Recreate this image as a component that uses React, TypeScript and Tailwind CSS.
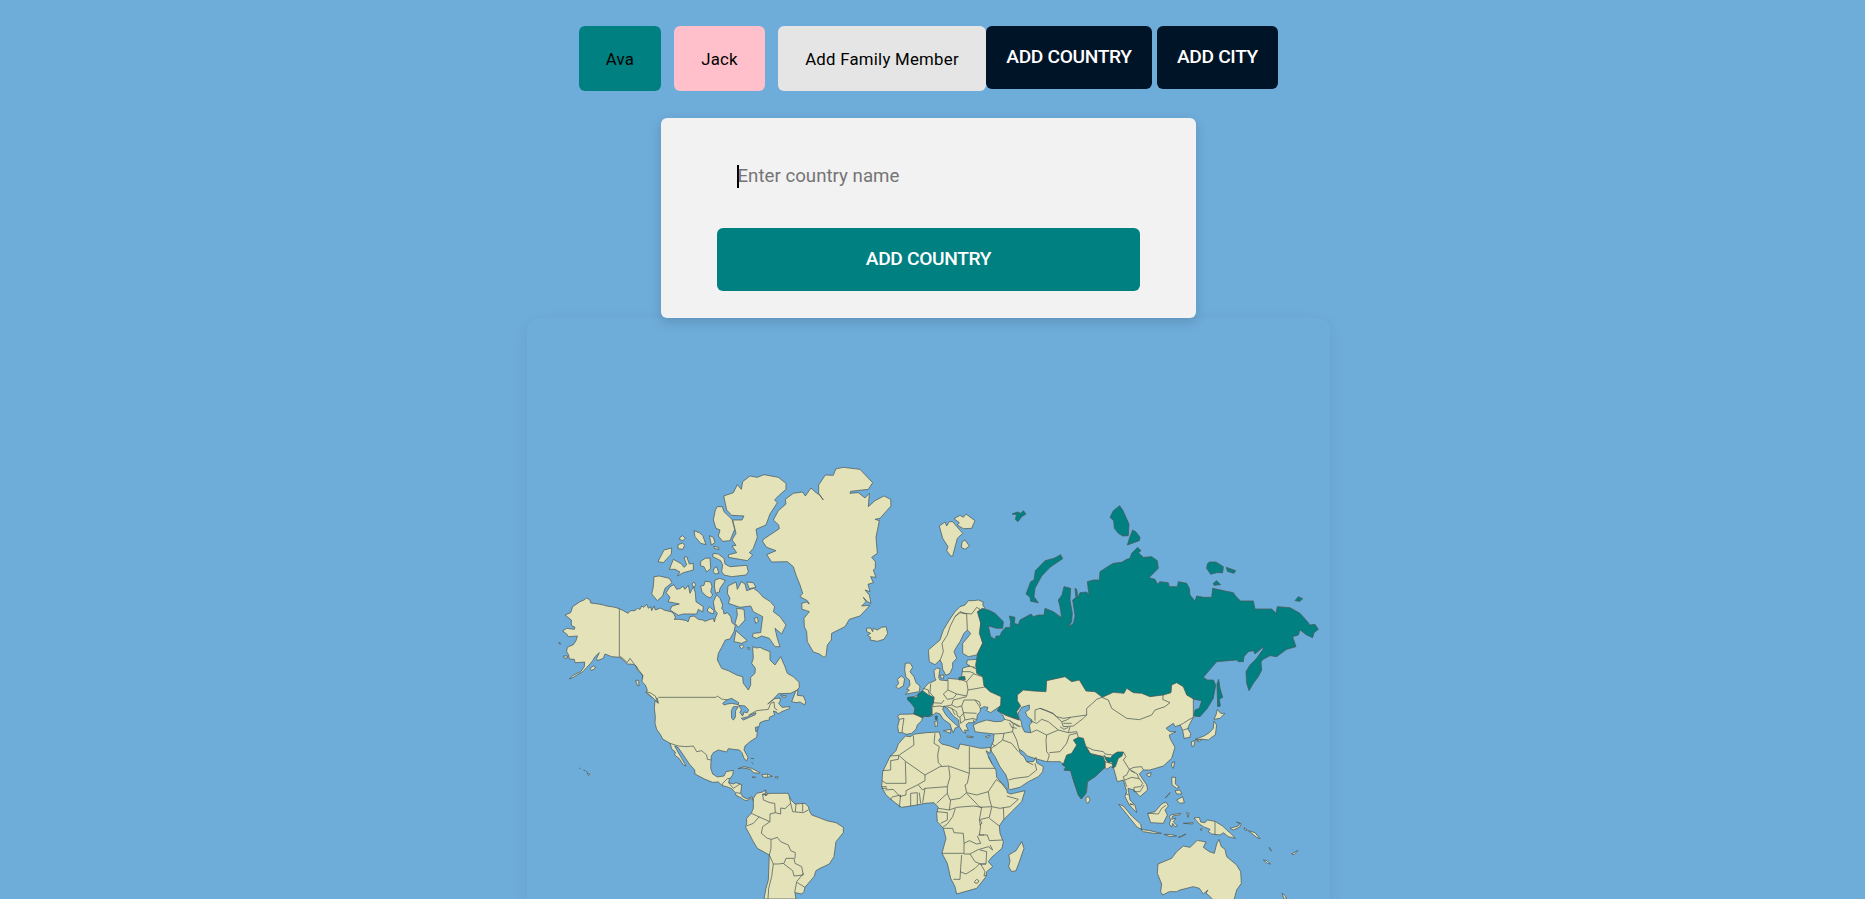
import { useState } from "react";

type Region = {
  x: number;
  y: number;
  land?: string[];
  visited?: string[];
  water?: string[];
  borders?: string[];
};

const REGIONS: Region[] = [
  // North and South America
  {
    x: 540,
    y: 640,
    land: [
      "75,-75 92,-82 98,-100 120,-115 132,-120 140,-126 150,-120 152,-111 175,-108 190,-105 200,-102 225,-98 238,-94 250,-88 264,-80 272,-88 285,-88 292,-95 300,-92 305,-102 312,-98 320,-107 325,-95 332,-100 335,-88 342,-102 346,-90 362,-96 372,-90 395,-84 402,-78 407,-66 402,-62 420,-62 440,-58 444,-54 450,-70 462,-72 475,-62 488,-60 495,-56 510,-62 520,-64 523,-54 526,-66 532,-80 524,-90 520,-115 530,-136 540,-125 548,-105 545,-94 550,-90 552,-78 562,-82 572,-70 576,-52 586,-44 582,-25 570,-3 556,0 545,22 535,40 532,60 545,85 565,92 590,105 608,110 610,130 625,150 632,135 632,112 645,100 646,85 635,70 640,55 638,20 650,24 660,22 672,28 690,35 690,60 705,75 722,50 735,80 742,100 760,110 777,127 778,142 772,150 752,160 715,161 700,178 683,192 704,176 720,174 721,182 716,190 726,202 750,200 748,206 725,215 714,222 710,216 700,213 704,225 688,232 688,240 672,243 660,248 658,258 648,268 652,276 650,292 630,305 615,318 612,330 624,352 620,363 612,355 606,338 598,330 580,328 565,326 560,336 535,330 520,338 514,348 512,385 518,402 532,411 552,408 558,395 580,391 578,405 568,418 566,428 580,432 588,428 605,434 602,460 608,470 622,477 636,470 640,482 632,474 622,482 612,480 604,474 588,466 586,458 575,446 560,440 548,438 535,426 518,427 495,418 465,402 464,390 448,372 430,345 414,322 404,318 414,336 425,355 438,378 430,375 418,356 404,345 406,336 396,328 390,310 368,297 362,285 350,268 345,250 346,230 343,205 345,182 355,190 352,175 335,172 318,158 322,150 316,135 306,125 308,105 292,90 290,80 280,73 262,72 252,62 240,52 215,50 195,42 190,55 172,62 170,55 178,38 165,50 158,62 150,72 128,95 100,112 88,117 98,107 122,95 133,80 134,66 125,67 105,68 103,58 88,57 86,45 80,35 82,22 100,14 108,2 112,-12 85,-10 80,-18 68,-27 80,-35 103,-32 105,-38 94,-44 94,-60",
      "640,475 650,460 668,456 676,450 682,462 678,468 672,460 668,465 690,460 745,460 748,470 755,482 765,492 795,490 805,500 808,512 815,525 840,534 860,542 888,548 910,562 910,578 888,605 882,650 868,672 840,685 828,692 822,710 795,742 792,755 785,762 765,758 768,777 672,777 678,745 685,720 688,645 652,625 640,605 628,582 617,562 620,550 620,535 634,520 640,505",
      "594,386 612,380 635,385 660,398 658,400 640,398 632,388 610,384",
      "666,404 682,402 697,409 680,412 668,411",
      "636,411 647,411 644,414",
      "706,410 714,410 714,414 706,414",
      "755,185 768,152 774,150 772,166 790,168 797,185 794,195 780,186 768,188",
      "318,155 330,158 346,168 353,186 343,178",
      "150,85 160,78 167,81 162,88 154,91",
      "57,7 61,9 61,13 58,12",
      "70,48 82,48 82,54 74,55",
      "287,121 296,121 297,138 292,136",
      "141,399 149,402 146,407",
      "722,165 740,168 735,172 726,170",
    ],
    water: [
      "548,190 560,180 575,175 596,188 595,194 575,190 562,192 552,195",
      "575,235 574,212 580,200 595,200 587,212 586,232 580,240",
      "596,196 615,198 626,210 622,218 612,216 608,228 600,218 604,208",
      "604,235 625,230 632,224 648,218 646,224 628,232 610,240",
      "646,262 655,260 653,270 648,276",
    ],
    borders: [
      "238,-94 238,50 245,52 262,68 270,55 285,75 300,95 308,106 308,115",
      "355,172 528,172 532,168 545,177 562,180",
      "625,226 650,212 685,208 692,190 702,186 704,205 712,210",
      "390,310 415,318 438,320 460,318 470,335 485,332 500,345 502,358 514,360",
      "548,438 548,430 562,416 570,415",
      "566,428 580,445 600,432",
      "588,458 602,460",
      "668,462 670,480 690,488 704,490 706,518 690,522 690,545 660,532 634,520",
      "706,518 722,522 722,504 735,506 752,490 748,470",
      "752,490 758,515 790,518 805,510",
      "768,492 766,515",
      "788,490 788,515",
      "658,530 640,550 620,558",
      "690,545 668,560 664,580 682,595 695,598 712,592 722,605 745,615 752,632 766,638 765,655",
      "693,598 693,625 688,645 700,672 715,672 732,670 738,655 762,655 765,670 785,680 790,705 762,708 758,692 732,672",
      "700,672 695,710 686,745 684,777",
      "790,700 770,725 764,758",
      "772,728 795,742",
      "675,450 678,468",
      "632,355 642,356",
      "634,366 640,372",
      "118,384 122,386",
      "130,390 136,392",
      "138,394 143,396",
      "682,402 682,412",
    ],
  },
  // Canadian Arctic islands
  {
    x: 540,
    y: 460,
    land: [
      "551,108 580,98 592,74 604,88 608,65 630,48 652,52 672,44 715,52 738,70 738,88 715,108 704,120 712,128 690,162 678,195 648,208 652,232 640,265 628,278 638,285 622,302 565,292 566,284 590,278 576,258 588,256 576,240 588,220 578,180 606,180 612,168 575,166 560,150",
      "532,140 547,140 552,155 576,178 584,208 570,242 548,244 535,228 540,210 528,205 520,180 526,150",
      "462,212 478,218 488,226 498,254 482,250 465,230",
      "508,227 520,232 525,248 514,255",
      "521,259 535,262 537,268 524,266",
      "420,232 428,227 436,235 428,242 418,238",
      "414,254 428,249 434,256 428,268 414,266",
      "354,305 372,270 395,264 394,282 370,308",
      "388,328 400,298 425,312 432,322 440,315 432,292 440,290 448,312 460,310 460,330 430,338 412,348 420,336 405,328",
      "482,304 496,295 510,294 512,325 500,336 492,320 482,318",
      "520,280 535,282 552,295 555,312 570,320 620,316 625,335 618,345 575,350 552,345 545,335 548,315 542,302 518,290",
      "522,325 530,320 537,340 525,342 520,335",
      "342,350 358,348 388,355 396,368 375,385 368,408 352,422 335,402 340,380",
      "378,398 390,380 402,374 410,388 422,385 428,378 435,388 445,376 450,400 460,380 466,398 468,425 490,440 488,456 475,448 470,462 430,462 415,466 390,450 396,438 418,432 384,425 390,412",
      "456,372 462,366 467,374 462,384",
      "482,378 492,376 495,364 512,366 516,380 512,395 518,405 510,414 498,408 486,395",
      "525,360 540,355 556,362 540,385 538,396 527,400 523,378",
      "502,450 508,440 522,452 520,462 505,456",
      "562,400 564,378 588,366 592,388 604,365 615,372 620,392 640,385 655,395 670,412 690,424 704,440 700,455 720,470 738,495 725,522 705,505 712,535 720,560 705,560 688,535 665,528 650,535 637,530 640,520 662,518 668,470 640,455 632,438 600,442 565,430 570,415",
      "620,366 640,368 648,382 628,386",
      "590,445 612,448 615,480 595,502 585,490 592,465",
      "588,512 608,530 622,542 605,550 582,545",
      "598,558 608,554 612,560 604,566",
      "622,563 628,563 627,570",
      "643,475 652,472 655,485 647,490",
    ],
  },
  // Greenland, Iceland, Svalbard
  {
    x: 750,
    y: 450,
    land: [
      "220,150 206,130 206,105 226,75 250,76 257,57 280,52 330,58 368,98 355,118 302,124 300,130 325,128 345,144 358,130 355,170 375,152 402,138 422,148 423,168 390,205 375,208 388,212 378,262 382,310 365,322 376,335 376,355 370,360 378,382 362,380 370,398 354,403 360,425 345,420 358,435 363,460 352,455 340,442 348,455 335,468 360,466 330,498 298,508 285,530 245,550 244,570 232,585 228,618 222,622 208,612 190,606 172,575 170,545 163,530 162,505 178,485 170,482 156,478 155,460 170,456 178,462 172,452 150,440 158,430 150,405 138,375 130,350 112,335 65,336 50,314 78,302 50,292 38,275 40,268 88,236 86,225 70,210 85,182 108,162 106,148 130,130 158,126 166,138 183,114 198,128 208,134",
      "350,535 362,534 368,545 370,535 382,540 395,532 408,530 413,550 402,568 382,574 360,570 362,562 352,556 362,550 350,545",
      "568,228 585,216 590,228 598,215 608,215 638,250 622,265 608,318 602,318 590,302 594,290 578,265",
      "612,206 630,196 640,202 648,192 675,212 665,235 640,236 622,225 628,218",
      "636,276 645,270 658,288 645,298 634,292",
    ],
  },
  // Europe and Asia mainland, British Isles, Scandinavia
  {
    x: 860,
    y: 580,
    land: [
      "350,238 322,240 320,252 330,258 308,264 305,290 296,298 264,295 262,302 240,300 236,292 240,266 230,264 222,272 224,292 228,300 212,308 205,310 192,325 185,335 172,345 160,352 143,355 150,365 160,375 165,385 162,402 120,403 113,408 118,420 113,440 116,458 128,458 138,463 155,460 168,448 172,435 185,422 188,410 215,408 228,398 240,402 250,418 270,432 275,448 280,458 285,445 295,440 272,420 258,405 248,388 252,378 262,385 280,408 296,420 298,440 308,455 318,460 313,450 325,452 318,435 325,428 340,428 350,420 352,405 360,395 362,385 372,380 384,382 380,392 392,398 410,385 422,378 412,390 428,405 434,418 425,424 405,425 380,420 355,428 340,435 345,455 365,458 385,460 402,462 400,485 392,502 395,515 405,530 420,560 438,585 445,608 446,625 450,629 480,622 505,605 535,590 548,575 550,560 530,548 528,532 520,545 500,545 492,530 480,520 478,508 490,515 502,528 530,537 560,545 600,545 610,552 606,553 618,560 612,570 632,572 640,600 655,645 664,657 680,635 682,605 705,590 735,562 740,568 752,560 760,562 772,605 790,600 800,635 795,650 808,675 830,698 825,675 810,660 804,625 822,630 840,650 863,630 860,615 838,582 850,570 870,570 910,558 935,535 945,502 930,475 928,465 948,455 930,455 918,445 940,430 945,440 960,435 968,450 972,475 990,472 992,460 984,448 985,440 1000,412 1000,290 600,250 420,240",
      "375,85 368,75 370,66 355,60 340,62 325,62 315,75 300,80 285,95 268,120 250,150 240,180 205,210 208,245 225,254 240,240 246,250 248,268 258,286 270,280 278,262 278,248 290,235 282,215 290,200 300,185 312,160 322,150 332,160 325,170 308,190 308,220 325,230 350,225 368,190 362,150 362,100",
      "136,250 150,249 158,262 150,275 162,290 168,308 180,318 178,335 160,338 136,343 148,330 140,328 150,315 148,300 138,292 134,270",
      "112,298 124,288 134,296 130,318 115,326 108,320 116,310",
      "224,425 232,422 232,438 226,440",
      "250,452 273,448 271,460",
      "320,468 340,470 338,473 322,472",
      "376,470 390,466 384,474",
      "240,286 252,285 250,296 242,292",
    ],
    visited: [
      "143,352 160,350 162,354 172,350 174,342 188,332 205,345 222,352 220,368 215,378 216,405 205,410 190,408 188,414 162,402 165,385 152,368 143,360",
      "226,408 232,408 231,420 226,418",
      "297,292 314,289 316,299 297,300",
      "610,552 606,553 618,562 612,570 632,572 640,600 655,645 664,657 678,640 682,605 705,590 735,562 735,545 730,530 692,522 678,500 670,475 655,472 640,480 650,495 635,520 620,525",
      "732,526 738,532 752,534 758,525 772,516 790,516 786,528 775,535 766,560 758,564 756,545 745,548 738,540",
    ],
  },
  // Russia
  {
    x: 1070,
    y: 490,
    visited: [
      "-263,355 -240,362 -225,370 -200,395 -202,415 -220,415 -245,408 -238,440 -225,448 -222,438 -210,438 -205,425 -192,412 -180,413 -178,395 -182,378 -165,382 -167,400 -155,404 -150,390 -117,372 -110,380 -95,375 -78,375 -75,355 -50,365 -25,383 -30,350 -35,330 -24,315 -18,290 2,295 0,330 7,370 5,395 -5,412 10,400 15,378 8,330 18,322 15,295 20,298 22,310 22,325 30,308 50,306 57,315 52,275 70,270 88,270 90,245 110,232 130,220 155,217 170,208 180,205 185,190 203,172 213,182 205,188 220,202 245,200 262,212 265,235 237,263 255,268 262,282 270,275 295,278 298,290 322,290 325,275 350,280 358,295 360,315 375,333 380,318 400,322 425,322 428,295 490,308 500,322 512,333 550,333 555,357 605,357 618,370 622,350 660,353 690,370 715,398 718,405 735,403 745,418 732,428 728,443 710,435 690,420 685,435 668,440 678,470 650,478 620,500 600,497 580,508 573,515 575,540 565,560 550,580 537,602 530,580 528,545 540,525 560,505 583,472 575,475 555,492 550,482 535,485 522,500 520,515 505,515 500,510 440,515 400,562 412,570 430,570 437,585 430,625 412,655 390,680 372,678 375,660 388,655 395,632 372,628 350,615 340,590 320,578 305,585 303,608 280,615 240,620 215,610 190,608 170,595 162,610 130,607 97,622 75,605 48,603 28,570 5,575 -15,560 -70,572 -72,605 -110,603 -140,600 -158,615 -158,632 -148,648 -160,665 -152,690 -175,682 -200,672 -218,662 -208,645 -207,620 -240,605 -258,588 -262,560 -280,550 -283,525 -278,495 -262,460 -272,430 -268,400 -278,365",
      "149,47 158,60 177,102 175,137 158,138 145,130 133,115 131,92 120,82 130,62",
      "188,120 198,126 210,142 208,152 172,165 180,140",
      "410,235 412,222 418,216 438,216 460,230 458,248 440,248 422,253",
      "469,232 497,242 492,250 472,244",
      "430,280 440,272 452,284 432,286",
      "675,332 685,320 698,326 690,334",
      "441,582 446,568 450,595 458,622 448,628 451,648 443,650 442,620",
      "-174,72 -158,66 -148,70 -140,62 -132,72 -145,80 -156,95 -164,88 -160,74",
      "-132,312 -118,275 -108,270 -104,242 -75,212 -48,205 -28,194 -22,206 -60,232 -85,258 -105,295 -108,320 -95,338 -118,334 -120,322",
    ],
  },
  // Africa
  {
    x: 860,
    y: 720,
    land: [
      "136,48 150,50 165,42 200,38 238,36 242,52 236,62 245,72 270,78 295,88 300,72 330,78 362,85 378,84 392,82 390,100 378,92 395,130 408,150 410,172 440,205 442,218 452,222 495,212 485,245 455,275 430,300 418,318 420,340 430,365 426,385 395,412 385,425 398,440 380,455 378,470 350,505 290,522 285,500 272,475 262,430 246,400 258,355 250,325 232,305 230,280 235,262 222,248 195,250 165,256 125,262 105,248 78,225 65,200 68,155 90,110 108,92 115,72",
      "485,365 492,385 480,420 468,452 455,455 446,440 450,422 446,405 468,392",
      "678,232 686,230 690,240 684,250 678,245",
    ],
    borders: [
      "118,105 162,75 160,48",
      "68,152 92,150 92,122 115,118 116,106 90,108",
      "116,106 138,125 195,165 240,140 266,138 328,160 328,80",
      "136,125 138,190 100,190 78,190 66,182",
      "225,40 222,70 238,80 233,105 235,128 245,138",
      "195,165 195,182 172,195 138,212 138,225 118,230",
      "266,140 270,170 262,200 195,205 188,210 175,195",
      "195,205 188,248",
      "328,145 405,145",
      "328,160 322,190 315,195 320,218 300,235 270,240 262,220 262,200",
      "262,220 240,240 230,250",
      "235,265 268,270 272,240",
      "320,218 350,225 385,215 408,180",
      "385,215 388,235 395,260 420,265 450,260 475,238 440,228",
      "408,178 425,190 440,210",
      "320,220 360,262 395,260",
      "268,270 290,262 340,258 365,262",
      "365,262 358,300 362,318 358,345 372,345",
      "395,262 388,292 362,298",
      "388,295 418,318",
      "430,262 432,300",
      "286,265 278,290 262,312 248,322",
      "230,275 262,278 262,300 242,310",
      "250,325 278,325 282,338 310,340 312,370 312,400 246,400",
      "312,370 328,362 350,372 362,370 352,348",
      "355,345 382,345 388,362 428,360",
      "312,402 330,402 352,390 385,380 398,390 390,375",
      "305,405 302,442 300,478 280,478",
      "300,455 318,462 345,445 358,432 378,432",
      "330,402 345,425 362,432 378,432 380,395 360,390",
      "362,432 375,455 372,468 380,466",
      "344,484 350,478 357,482 352,490 344,488 344,484",
      "118,262 122,225 100,230",
      "152,258 152,220 172,218 172,255",
      "178,218 182,250",
      "76,210 100,208 118,228",
      "90,240 100,228",
      "64,200 80,200",
      "64,205 82,205",
      "360,298 366,310 358,315",
      "396,130 384,110",
    ],
  },
  // Inland seas and Eurasian borders
  {
    x: 860,
    y: 580,
    water: [
      "474,400 485,382 508,375 508,388 496,396 502,410 516,420 515,428 508,435 512,458 494,456 486,440 484,425 478,415",
    ],
    borders: [
      "240,242 250,215 246,190 262,165 270,140 285,110 300,98 320,102 322,150",
      "285,110 300,95 315,100 335,102 350,82 360,88 358,98",
      "338,262 348,266",
      "306,275 330,275 342,280 320,305 305,300",
      "325,258 345,262",
      "342,282 368,290",
      "320,305 324,330 370,322 378,320",
      "264,300 264,330 290,342 320,348 324,330",
      "264,330 250,342 262,358 280,355 290,342",
      "212,312 210,338 222,352 220,368 245,370 252,360",
      "190,325 205,330 208,345",
      "220,368 218,380 240,378 250,380 275,375 280,360 320,350",
      "275,375 290,382 305,378 312,360",
      "305,378 310,398 350,400",
      "312,360 345,360 358,378 362,388",
      "345,360 358,365 362,378",
      "260,380 275,385 290,395 292,408 300,412 310,400",
      "275,385 285,405",
      "310,398 315,420 340,415 350,420",
      "300,412 302,430 315,420",
      "340,418 342,430",
      "118,418 132,415 128,440 126,458",
      "162,402 188,410",
      "216,405 216,378",
      "434,418 450,422 460,432 458,455 432,460 402,462",
      "434,405 455,412 478,420",
      "450,422 472,438 482,440",
      "448,428 455,442 470,445",
      "458,455 470,480 475,500 478,508",
      "432,460 428,480 405,498 395,490",
      "428,480 455,490 475,515",
      "405,498 392,505",
      "445,600 465,595 505,590 530,570 525,550",
      "500,545 520,555",
      "512,458 530,450 560,465 558,480 560,515 568,525 562,545",
      "560,465 595,450 625,458 650,455 655,472",
      "568,518 600,515 620,490 628,465 650,460",
      "510,422 530,430 545,418 565,425 595,450",
      "525,422 525,390 540,385 580,400 590,410 610,415 680,405",
      "540,385 555,390 580,402 605,425 620,420 632,412",
      "605,425 610,440 640,438 670,415 680,405 680,385 695,372 710,358 725,352",
      "625,458 630,440",
      "610,430 635,430",
      "600,440 612,448 625,442",
      "725,352 745,360 755,385 800,415 838,419 875,405 885,390 915,380 930,368 908,358 910,345",
      "678,500 700,510 730,515 735,522 758,525",
      "680,505 690,520 730,530",
      "790,516 798,530 790,540 808,568 825,578",
      "808,568 800,585 790,590 800,620",
      "808,568 822,562 845,560 850,570",
      "812,572 832,582 835,592 848,610 842,620 822,622",
      "795,600 815,592 838,596",
      "822,622 822,635 840,635 852,615",
      "735,565 735,545 745,548 758,552",
      "1000,412 985,420 970,430 960,435",
      "970,450 985,445",
      "796,640 806,645",
      "808,675 820,672",
      "462,430 478,438",
    ],
  },
  // East Asia and Oceania islands
  {
    x: 1080,
    y: 660,
    land: [
      "412,148 422,160 435,160 420,175 402,178 408,165",
      "402,183 410,195 406,225 395,232 385,240 370,238 345,238 372,228 388,218 400,205",
      "334,245 345,242 342,258 336,260",
      "350,242 366,238 358,246",
      "276,308 284,305 280,325 274,318",
      "200,342 214,338 210,350 202,348",
      "275,352 287,352 286,372 298,382 290,385 276,375",
      "285,392 300,390 306,402 290,402",
      "290,420 308,410 313,428 300,430",
      "256,414 270,398 266,404",
      "116,433 130,438 155,468 182,492 185,508 172,502 150,475 130,450",
      "182,508 210,512 244,520 220,520 190,515",
      "203,460 225,455 245,432 258,426 265,438 255,450 262,465 250,490 212,488",
      "268,470 275,464 302,460 300,464 278,468 275,478 288,474 280,485 292,498 285,500 278,490 275,502 268,492 272,480",
      "252,523 275,524 290,528 270,530",
      "295,532 318,522 305,530",
      "320,458 327,460 324,472",
      "310,490 340,488 338,492",
      "342,474 358,472 362,486 375,488 382,480 405,484 428,498 440,510 452,520 466,535 445,530 430,518 420,525 395,522 385,515 390,508 370,500 358,492",
      "450,505 475,498 480,490 470,486 484,492 478,502 460,510",
      "492,503 502,510 496,512",
      "505,512 525,518 540,536 530,532",
      "568,562 575,572 571,572",
      "550,600 560,602 572,612 562,610",
      "635,582 645,576 654,571 642,584",
      "606,700 614,706 620,717 612,717",
      "232,640 234,612 275,595 290,575 310,558 330,562 352,541 378,546 370,562 388,575 403,580 410,552 417,538 424,560 435,568 440,590 470,615 482,635 484,670 470,690 462,720 400,720 385,705 378,700 384,690 370,702 358,685 340,680 300,690 290,695 268,695 248,705 242,695 245,672",
      "360,508 366,506 364,512",
    ],
    borders: ["405,484 405,524", "203,460 235,462 245,445 258,436", "150,430 162,436"],
  },
];

function WorldMap() {
  return (
    <svg viewBox="527 318 803 581" className="block h-[581px] w-[803px]">
      {REGIONS.map((r, i) => (
        <g
          key={i}
          transform={`translate(${r.x} ${r.y}) scale(0.33333)`}
          stroke="#4c5856"
          strokeWidth="2.2"
          strokeLinejoin="round"
        >
          {r.land?.map((p, j) => <polygon key={`l${j}`} points={p} fill="#e3e2b8" />)}
          {r.water?.map((p, j) => <polygon key={`w${j}`} points={p} fill="#6eacda" />)}
          {r.borders?.map((p, j) => <polyline key={`b${j}`} points={p} fill="none" />)}
          {r.visited?.map((p, j) => <polygon key={`v${j}`} points={p} fill="#008080" />)}
        </g>
      ))}
    </svg>
  );
}

export default function App() {
  const [country, setCountry] = useState("");
  return (
    <div className="flex h-[899px] flex-col items-center overflow-hidden bg-[#6eacda] pt-[26px] pr-2 font-[Roboto,sans-serif] text-black">
      <header className="flex h-[65px] items-start">
        <div className="flex gap-[13px] text-[16.8px] tracking-[0.25px]">
          <button className="h-[65px] w-[82px] rounded-md bg-[#008080] pt-0.5">Ava</button>
          <button className="h-[65px] w-[91px] rounded-md bg-[#ffc0cb] pt-0.5">Jack</button>
          <button className="h-[65px] w-[208px] rounded-md bg-[#e5e5e5] pt-0.5">Add Family Member</button>
        </div>
        <div className="flex gap-[5px] text-[19.2px] font-medium tracking-[-0.35px] text-white">
          <button className="h-[63px] w-[166px] rounded-md bg-[#001427]">ADD COUNTRY</button>
          <button className="h-[63px] w-[121px] rounded-md bg-[#001427]">ADD CITY</button>
        </div>
      </header>
      <form
        className="relative z-10 mt-[27px] flex h-[200px] w-[535px] shrink-0 flex-col rounded-md bg-[#f2f2f2] px-14 pt-[27px] shadow-[0_4px_12px_rgba(0,0,0,0.15)]"
        onSubmit={(e) => e.preventDefault()}
      >
        <div className="flex h-[63px] items-center pl-5">
          <span className="h-[23px] w-0.5 shrink-0 bg-black" />
          <input
            value={country}
            onChange={(e) => setCountry(e.target.value)}
            placeholder="Enter country name"
            className="-ml-[1.5px] w-full bg-transparent text-[18.7px] outline-none placeholder:text-[#757575]"
          />
        </div>
        <button className="mt-5 h-[63px] w-[423px] rounded-md bg-[#008080] text-[19.2px] font-medium tracking-[-0.35px] text-white">
          ADD COUNTRY
        </button>
      </form>
      <main className="h-[640px] w-[803px] shrink-0 rounded-xl shadow-[0_4px_16px_rgba(0,0,0,0.06)]">
        <WorldMap />
      </main>
    </div>
  );
}
